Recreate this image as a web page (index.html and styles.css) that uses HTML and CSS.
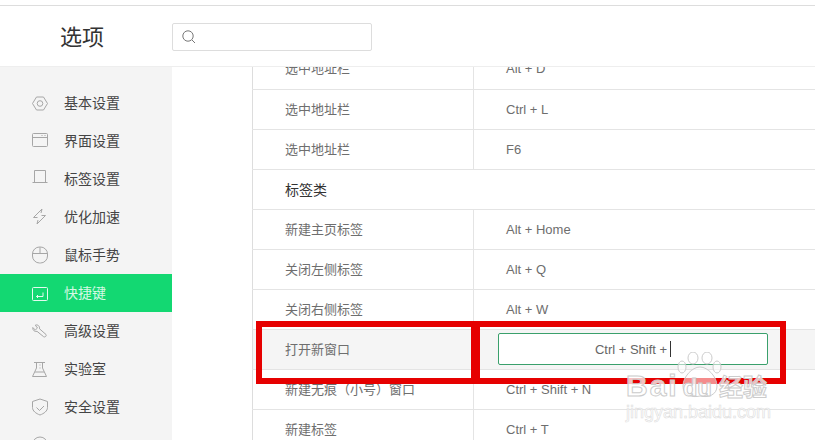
FILE: index.html
```html
<!DOCTYPE html>
<html lang="en">
<head>
    <meta charset="UTF-8">
    <meta name="viewport" content="width=device-width, initial-scale=1.0">
    <title>选项</title>
    <link rel="stylesheet" href="styles.css">
</head>
<body>
    <div class="top-line"></div>
    <header class="header">
        <h1 class="title">选项</h1>
        <div class="search">
            <svg class="search-icon" viewBox="0 0 16 16" width="16" height="16"><circle cx="7" cy="7" r="5.2"/><path d="M11 11l3 3"/></svg>
        </div>
    </header>
    <div class="main">
        <nav class="sidebar">
            <a class="nav-item">
                <svg viewBox="0 0 18 18" width="18" height="18"><path d="M4.500 3h7l4 6.500-4 6.500h-7L.5 9.500z"/><circle cx="8" cy="9.500" r="2.800"/></svg>
                <span>基本设置</span>
            </a>
            <a class="nav-item">
                <svg viewBox="0 0 18 18" width="18" height="18"><rect x=".5" y="1.500" width="15" height="13" rx="1"/><path d="M.5 5.500h15M9.500 3.500h1M12.500 3.500h1"/></svg>
                <span>界面设置</span>
            </a>
            <a class="nav-item">
                <svg viewBox="0 0 18 18" width="18" height="18"><path d="M2.500 12V.5h11V12M.5 12.500h15"/></svg>
                <span>标签设置</span>
            </a>
            <a class="nav-item">
                <svg viewBox="0 0 18 18" width="18" height="18"><path d="M10 1L1.500 9.500h4M9.500 7.500h4L5 16M10 1L9 5M5 16l1-4"/></svg>
                <span>优化加速</span>
            </a>
            <a class="nav-item">
                <svg viewBox="0 0 18 18" width="18" height="18"><rect x=".5" y="1" width="15" height="16" rx="7"/><path d="M.5 7.500h15M8 1v6.500"/></svg>
                <span>鼠标手势</span>
            </a>
            <a class="nav-item active">
                <svg viewBox="0 0 18 18" width="18" height="18"><rect x=".5" y="3.500" width="15" height="13" rx="1"/><path d="M11 8.500v4H4.500M6 11l-1.500 1.500L6 14"/></svg>
                <span>快捷键</span>
            </a>
            <a class="nav-item">
                <svg viewBox="0 0 18 18" width="18" height="18"><path d="M.8 5.500L3.300 8 5.500 6 3.300 3.200C5.500 2.200 8 4 7.500 6.800l6.500 5.700c1 1.300-1 3.200-2.400 2.200L5.100 9.400C2.500 10 .4 8 .8 5.500z"/></svg>
                <span>高级设置</span>
            </a>
            <a class="nav-item">
                <svg viewBox="0 0 18 18" width="18" height="18"><path d="M2 2.500h11M4.500 2.500V8L.5 16.500h14L10.500 8V2.500M3 12h9M7.500 5h1M7.500 8h1"/></svg>
                <span>实验室</span>
            </a>
            <a class="nav-item">
                <svg viewBox="0 0 18 18" width="18" height="18"><path d="M8 1l7.500 2.500v6c0 3.500-3.500 6-7.500 7.500C4 15.500.5 13 .5 9.500v-6z"/><path d="M4.500 9.500l3 3L12 8"/></svg>
                <span>安全设置</span>
            </a>
            <a class="nav-item">
                <svg viewBox="0 0 18 18" width="18" height="18"><circle cx="8" cy="8.500" r="7.500"/></svg>
            </a>
        </nav>
        <section class="content">
            <table class="keys">
                <tbody>
                    <tr><td>选中地址栏</td><td>Alt + D</td></tr>
                    <tr><td>选中地址栏</td><td>Ctrl + L</td></tr>
                    <tr><td>选中地址栏</td><td>F6</td></tr>
                    <tr class="group"><td colspan="2">标签类</td></tr>
                    <tr><td>新建主页标签</td><td>Alt + Home</td></tr>
                    <tr><td>关闭左侧标签</td><td>Alt + Q</td></tr>
                    <tr><td>关闭右侧标签</td><td>Alt + W</td></tr>
                    <tr class="editing">
                        <td>打开新窗口</td>
                        <td><div class="key-input">Ctrl + Shift +<i class="caret"></i></div></td>
                    </tr>
                    <tr><td>新建无痕（小号）窗口</td><td>Ctrl + Shift + N</td></tr>
                    <tr><td>新建标签</td><td>Ctrl + T</td></tr>
                </tbody>
            </table>
        </section>
    </div>

    <!-- annotation boxes and watermark lie over the page -->
    <div class="mark mark-left"></div>
    <div class="mark mark-right"></div>
    <div class="watermark">
        <svg class="paw" viewBox="0 0 50 50" width="50" height="50">
            <ellipse cx="6" cy="15" rx="4" ry="6"/>
            <ellipse cx="17" cy="6" rx="5" ry="6"/>
            <ellipse cx="31" cy="6" rx="5" ry="6"/>
            <ellipse cx="41" cy="15" rx="4" ry="6"/>
            <path d="M24 15c8 0 17 10 17 19 0 9-9 12-17 10-8 2-17-1-17-10 0-9 9-19 17-19z"/>
        </svg>
        <div class="wm-logo"><span>Bai</span><span class="wm-du">du</span><span class="wm-cn">经验</span></div>
        <div class="wm-url">jingyan.baidu.com</div>
    </div>
</body>
</html>
```

FILE: styles.css
```css
html, body {
    margin: 0;
    height: 440px;
    overflow: hidden;
    background: #fff;
    font-family: "Liberation Sans", "Noto Sans CJK SC", sans-serif;
    font-size: 14px;
}
.top-line {
    height: 5px;
    border-bottom: 1px solid #ddd;
}
.header {
    display: flex;
    align-items: center;
    height: 60px;
    border-bottom: 1px solid #eee;
}
.title {
    width: 172px;
    margin: 0 0 2px;
    padding-left: 60px;
    box-sizing: border-box;
    font-size: 22px;
    font-weight: normal;
    color: #333;
}
.search {
    display: flex;
    align-items: center;
    width: 200px;
    height: 28px;
    margin-top: 2px;
    padding-left: 8px;
    box-sizing: border-box;
    border: 1px solid #ddd;
    border-radius: 2px;
}
.search-icon {
    fill: none;
    stroke: #777;
    stroke-width: 1;
}
.main {
    display: flex;
    height: 373px;
    overflow: hidden;
}
.sidebar {
    flex: none;
    width: 172px;
    padding-top: 17px;
    background: #f4f4f4;
}
.nav-item {
    display: flex;
    align-items: center;
    gap: 14px;
    height: 38px;
    padding-left: 32px;
    color: #444;
}
.nav-item span {
    margin-bottom: 2px;
}
.nav-item svg {
    flex: none;
    fill: none;
    stroke: #a6a6a6;
    stroke-width: 1;
}
.nav-item.active {
    background: #13d872;
    color: #d5f8e4;
}
.nav-item.active svg {
    stroke: #e4fbef;
}
.content {
    flex: 1;
    padding-left: 80px;
    min-width: 0;
}
.keys {
    width: 563px;
    margin-top: -18px;
    border-collapse: collapse;
    table-layout: fixed;
    border-left: 1px solid #ddd;
    font-size: 13px;
    color: #6e6e6e;
}
.keys td {
    height: 40px;
    padding: 0 0 0 32px;
    box-sizing: border-box;
    border-bottom: 1px solid #e4e4e4;
}
.keys td:first-child {
    width: 221px;
    padding-bottom: 2px;
    border-right: 1px solid #e4e4e4;
}
.keys .group td {
    padding-bottom: 0;
    border-right: none;
    font-size: 14px;
    color: #333;
}
.keys .editing td {
    background: #f5f5f5;
}
.keys .editing td:last-child {
    padding-left: 24px;
}
.key-input {
    display: flex;
    align-items: center;
    justify-content: center;
    width: 270px;
    height: 32px;
    box-sizing: border-box;
    border: 1px solid #3aa06c;
    border-radius: 2px;
    background: #fff;
    color: #666;
}
.caret {
    width: 1px;
    height: 16px;
    margin-left: 3px;
    background: #333;
}
.mark {
    position: absolute;
    top: 321px;
    height: 63px;
    box-sizing: border-box;
    border: 6px solid #e60000;
}
.mark-left {
    left: 256px;
    width: 221px;
}
.mark-right {
    left: 474px;
    width: 312px;
}
.watermark {
    position: absolute;
    left: 626px;
    top: 350px;
    width: 150px;
    color: rgba(255, 255, 255, 0.75);
}
.paw {
    position: absolute;
    left: 50px;
    top: 2px;
    fill: rgba(255, 255, 255, 0.55);
    stroke: #ccc;
    stroke-width: 1;
}
.wm-logo {
    position: absolute;
    left: 0;
    top: 23px;
    display: flex;
    align-items: baseline;
    white-space: nowrap;
    font-size: 30px;
    line-height: 26px;
    font-weight: bold;
    letter-spacing: 2px;
    -webkit-text-stroke: 1px #ccc;
}
.wm-du {
    margin-left: 4px;
    font-size: 24px;
    letter-spacing: 0;
}
.wm-cn {
    margin-left: 7px;
    font-size: 24px;
    letter-spacing: 0;
}
.wm-url {
    position: absolute;
    left: 0;
    top: 52px;
    white-space: nowrap;
    font-size: 18px;
    line-height: 20px;
    -webkit-text-stroke: 0.6px #ddd;
}
```
